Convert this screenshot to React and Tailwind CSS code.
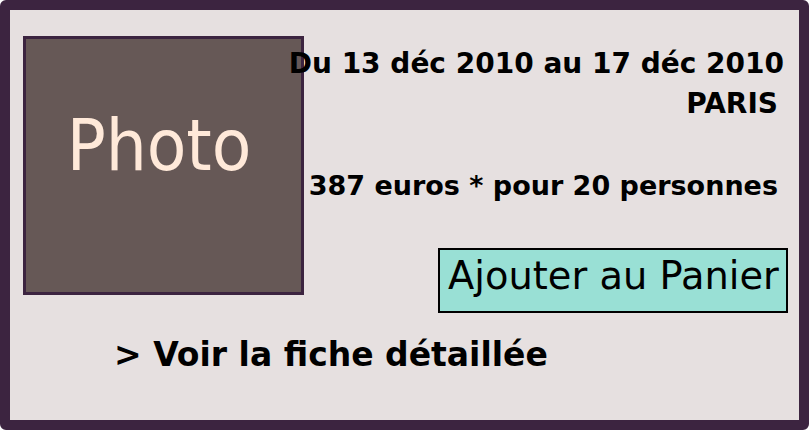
export default function App() {
  return (
    <div className="w-[809px] h-[430px] bg-white overflow-hidden">
      <div className="w-full h-full box-border border-[10px] border-[#3c2440] rounded-[6px] bg-[#e6e0e0] flex flex-col text-black">
        <div className="flex items-start">
          <div className="ml-[13px] mt-[26px] w-[281px] h-[259px] shrink-0 box-border border-[3px] border-[#3c2440] bg-[#665856] flex justify-center pt-[70px] pr-[9px]">
            <span className="text-[72px] leading-none text-[#ffe9d9] font-['DejaVu_Sans_Condensed','DejaVu_Sans',sans-serif]">
              Photo
            </span>
          </div>
          <div className="flex-1 min-w-0 flex flex-col items-end font-bold font-['DejaVu_Sans',sans-serif]">
            <div className="mt-[40px] mr-[15px] text-[28px] leading-none whitespace-nowrap">
              Du 13 déc 2010 au 17 déc 2010
            </div>
            <div className="mt-[12px] mr-[21px] text-[28px] leading-none">PARIS</div>
            <div className="mt-[54px] mr-[21px] text-[27px] leading-none whitespace-nowrap">
              387 euros * pour 20 personnes
            </div>
            <button className="mt-[49px] mr-[11px] w-[350px] h-[65px] shrink-0 box-border border-2 border-black bg-[#99e0d5] pl-[8px] pt-[7px] flex items-start text-left">
              <span className="block text-[38.4px] leading-none font-normal font-['DejaVu_Sans',sans-serif] whitespace-nowrap">
                Ajouter au Panier
              </span>
            </button>
          </div>
        </div>
        <a className="mt-[25px] ml-[104px] self-start text-[33px] leading-none font-bold whitespace-nowrap font-['DejaVu_Sans',sans-serif]">
          &gt; Voir la fiche détaillée
        </a>
      </div>
    </div>
  );
}
